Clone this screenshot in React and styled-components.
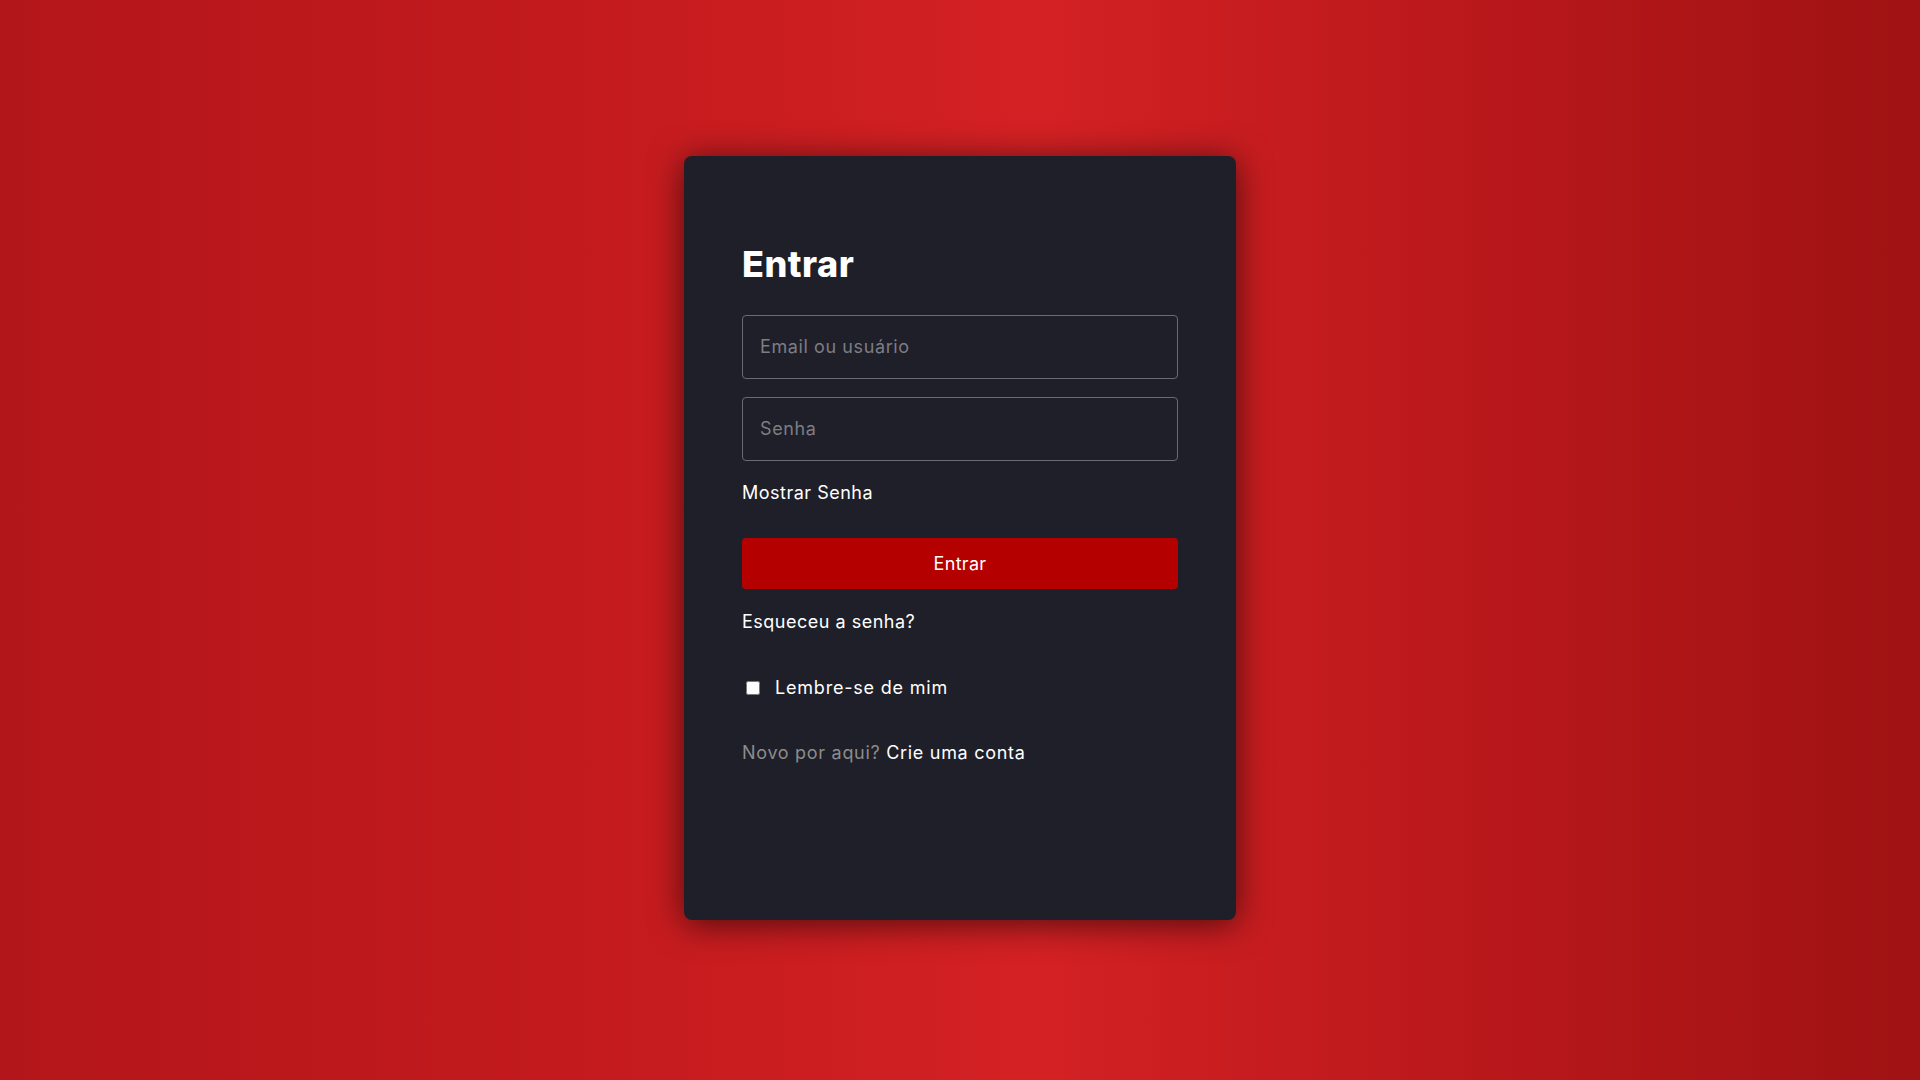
import React, { useState } from "react";
import styled, { createGlobalStyle } from "styled-components";

const GlobalStyle = createGlobalStyle`
  * { box-sizing: border-box; }
  body {
    margin: 0;
    font-family: Inter, "Open Sans", sans-serif;
  }
`;

const Page = styled.div`
  min-height: 100vh;
  padding-bottom: 5px;
  display: flex;
  align-items: center;
  justify-content: center;
  background: linear-gradient(
    90deg,
    #b3161a 0%,
    #c21a1d 28%,
    #d42124 54%,
    #b6171a 80%,
    #9f1213 100%
  );
`;

const Card = styled.form`
  width: 552px;
  height: 764px;
  padding: 86px 58px 0;
  background: #1f1f29;
  border-radius: 8px;
  box-shadow: 0 4px 34px rgba(0, 0, 0, 0.62);
  display: flex;
  flex-direction: column;
`;

const Title = styled.h1`
  margin: 0 0 29px;
  font-size: 36px;
  line-height: 44px;
  font-weight: 800;
  letter-spacing: 0.5px;
  color: #fff;
`;

const Field = styled.input`
  width: 100%;
  height: 64px;
  padding: 0 17px;
  margin-bottom: ${({ last }) => (last ? "0" : "18px")};
  background: transparent;
  border: 1px solid #6a6a70;
  border-radius: 4px;
  color: #fff;
  font-family: inherit;
  font-size: 18px;
  letter-spacing: 0.6px;
  outline: none;
  &::placeholder {
    color: #7d7d83;
  }
`;

const TextLink = styled.a`
  display: block;
  margin-top: ${({ top }) => top}px;
  font-size: 18px;
  line-height: 24px;
  letter-spacing: 0.5px;
  color: #fff;
  text-decoration: none;
  cursor: pointer;
`;

const Submit = styled.button`
  margin-top: 33px;
  height: 51px;
  width: 100%;
  border: none;
  border-radius: 4px;
  background: #b50000;
  color: #fff;
  font-family: inherit;
  font-size: 18px;
  letter-spacing: 0.3px;
  cursor: pointer;
`;

const Remember = styled.label`
  margin-top: 42px;
  display: flex;
  align-items: center;
  gap: 15px;
  font-size: 18px;
  line-height: 24px;
  letter-spacing: 0.8px;
  color: #fff;
  input {
    width: 14px;
    height: 14px;
    margin: 0 0 0 4px;
  }
`;

const SignUp = styled.p`
  margin: 41px 0 0;
  font-size: 18px;
  line-height: 24px;
  letter-spacing: 0.7px;
  color: #8c8c8c;
  a {
    color: #fff;
    text-decoration: none;
  }
`;

export default function App() {
  const [show, setShow] = useState(false);
  return (
    <>
      <GlobalStyle />
      <Page>
        <Card onSubmit={(e) => e.preventDefault()}>
          <Title>Entrar</Title>
          <Field type="text" placeholder="Email ou usuário" />
          <Field type={show ? "text" : "password"} placeholder="Senha" last />
          <TextLink top={20} onClick={() => setShow(!show)}>
            Mostrar Senha
          </TextLink>
          <Submit type="submit">Entrar</Submit>
          <TextLink top={21}>Esqueceu a senha?</TextLink>
          <Remember>
            <input type="checkbox" />
            Lembre-se de mim
          </Remember>
          <SignUp>
            Novo por aqui? <a href="#">Crie uma conta</a>
          </SignUp>
        </Card>
      </Page>
    </>
  );
}
